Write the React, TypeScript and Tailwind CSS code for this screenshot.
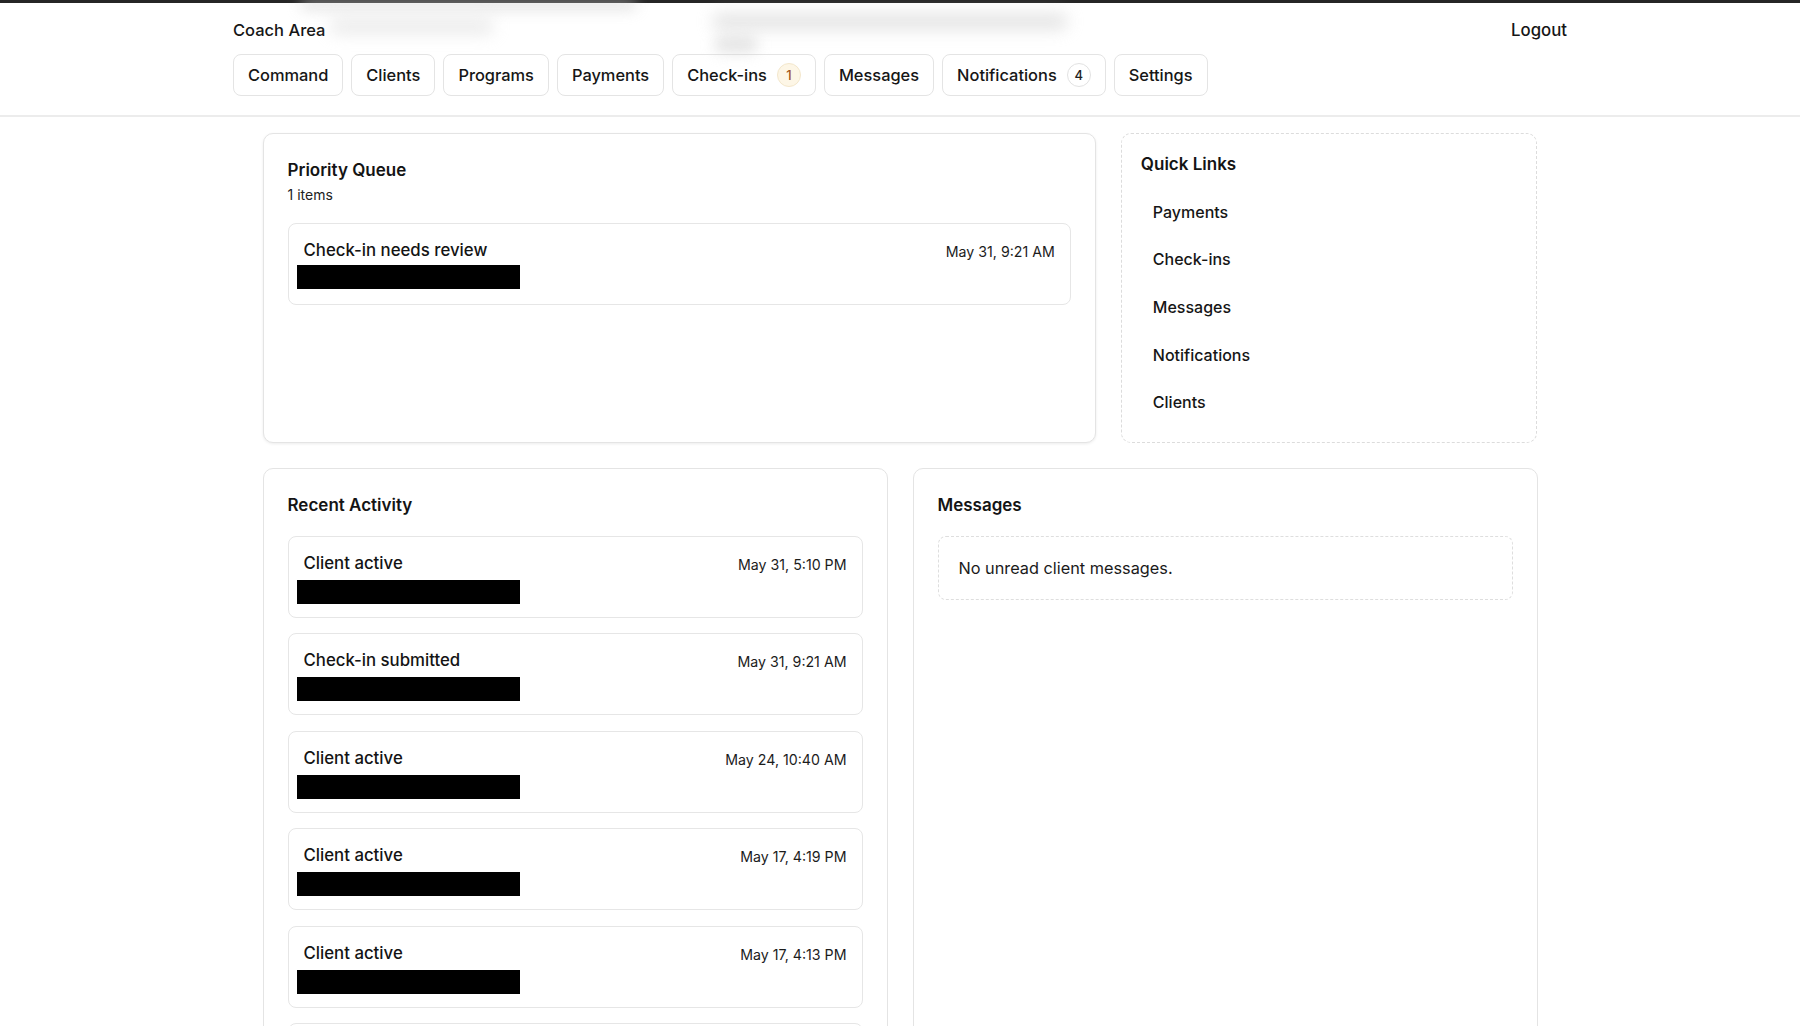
import React from "react";

const navItems: { label: string; badge?: string; badgeTone?: "warn" | "plain" }[] = [
  { label: "Command" },
  { label: "Clients" },
  { label: "Programs" },
  { label: "Payments" },
  { label: "Check-ins", badge: "1", badgeTone: "warn" },
  { label: "Messages" },
  { label: "Notifications", badge: "4", badgeTone: "plain" },
  { label: "Settings" },
];

const quickLinks = ["Payments", "Check-ins", "Messages", "Notifications", "Clients"];

const activity = [
  { title: "Client active", date: "May 31, 5:10 PM" },
  { title: "Check-in submitted", date: "May 31, 9:21 AM" },
  { title: "Client active", date: "May 24, 10:40 AM" },
  { title: "Client active", date: "May 17, 4:19 PM" },
  { title: "Client active", date: "May 17, 4:13 PM" },
  { title: "Client active", date: "May 10, 2:02 PM" },
];

function Item({ title, date, tight }: { title: string; date: string; tight?: boolean }) {
  return (
    <div
      className={
        tight
          ? "rounded-[8px] border border-[#e6e6e6] bg-white px-[15px] pt-[14px] pb-[15px]"
          : "rounded-[8px] border border-[#e6e6e6] bg-white px-[15px] pt-[14px] pb-[13px]"
      }
    >
      <div className="flex h-[24px] items-start justify-between">
        <span className="text-[16.8px] leading-[24px] font-medium text-[#141414]">{title}</span>
        <span className="pt-[4px] text-[14.2px] leading-[20px] text-[#1c1c1c]">{date}</span>
      </div>
      <div className={tight ? "mt-[3px] h-[24px]" : "mt-[5px] h-[24px]"}>
        <div className="-ml-[7px] h-[24px] w-[223px] bg-black" />
      </div>
    </div>
  );
}

export default function App() {
  return (
    <div className="relative min-h-screen bg-white font-['Inter',_'Noto_Sans',_sans-serif] text-[#111]">
      <div className="h-[3px] bg-[#262626]" />

      {/* blurred smudges over header */}
      <div className="pointer-events-none absolute left-[300px] top-[0px] h-[10px] w-[337px] rounded-full bg-[#d0d0d0] opacity-60 blur-[7px]" />
      <div className="pointer-events-none absolute left-[330px] top-[19px] h-[15px] w-[164px] rounded-full bg-[#d6d6d6] opacity-50 blur-[8px]" />
      <div className="pointer-events-none absolute left-[712px] top-[13px] h-[17px] w-[356px] rounded-full bg-[#d0d0d0] opacity-55 blur-[8px]" />
      <div className="pointer-events-none absolute left-[714px] top-[36px] h-[17px] w-[44px] rounded-full bg-[#cfcfcf] opacity-55 blur-[7px]" />

      <header className="border-b-2 border-[#ececec]">
        <div className="mx-auto w-[1334px] pt-[15px] pb-[19px]">
          <div className="flex h-[24px] items-center justify-between">
            <span className="text-[16.5px] leading-[24px] font-medium text-[#161616]">Coach Area</span>
            <span className="text-[16.8px] leading-[24px] font-medium text-[#161616]">Logout</span>
          </div>
          <nav className="mt-3 flex gap-2">
            {navItems.map((n) => (
              <button
                key={n.label}
                className="flex h-[42px] items-center gap-[10px] rounded-[8px] border border-[#e4e4e4] bg-white px-[14px] text-[16.4px] leading-[24px] font-medium text-[#161616]"
              >
                <span>{n.label}</span>
                {n.badge && (
                  <span
                    className={
                      n.badgeTone === "warn"
                        ? "flex h-[24px] w-[24px] items-center justify-center rounded-full border border-[#f3e7cc] bg-[#fdf6e6] text-[13px] font-medium text-[#a3561a]"
                        : "flex h-[24px] w-[24px] items-center justify-center rounded-full border border-[#e2e2e2] bg-white text-[13px] font-medium text-[#222]"
                    }
                  >
                    {n.badge}
                  </span>
                )}
              </button>
            ))}
          </nav>
        </div>
      </header>

      <main className="mx-auto w-[1275px] pt-4">
        <div className="grid grid-cols-[2fr_1fr] gap-[25px]">
          <section className="rounded-[10px] border border-[#e4e4e4] bg-white px-6 pt-[24px] pb-6 shadow-[0_1px_3px_rgba(0,0,0,0.08)]">
            <h2 className="text-[17px] leading-[24px] font-semibold text-[#141414]">Priority Queue</h2>
            <p className="mt-[3px] text-[14px] leading-[20px] text-[#222]">1 items</p>
            <div className="mt-[18px]">
              <Item tight title="Check-in needs review" date="May 31, 9:21 AM" />
            </div>
          </section>

          <section className="rounded-[10px] border border-dashed border-[#dcdcdc] bg-white px-[19px] pt-[18px] pb-[16px]">
            <h2 className="text-[17px] leading-[24px] font-semibold text-[#141414]">Quick Links</h2>
            <div className="mt-3 flex flex-col">
              {quickLinks.map((l) => (
                <a key={l} className="block py-[11.8px] pl-3 text-[16px] leading-[24px] font-medium text-[#161616]">
                  {l}
                </a>
              ))}
            </div>
          </section>
        </div>

        <div className="mt-[25px] grid grid-cols-2 gap-[25px] pb-10">
          <section className="rounded-[10px] border border-[#e4e4e4] bg-white px-6 pt-[24px] pb-6">
            <h2 className="text-[17px] leading-[24px] font-semibold text-[#141414]">Recent Activity</h2>
            <div className="mt-[19px] flex flex-col gap-[15.5px]">
              {activity.map((a, i) => (
                <Item key={i} title={a.title} date={a.date} />
              ))}
            </div>
          </section>

          <section className="rounded-[10px] border border-[#e4e4e4] bg-white px-6 pt-[24px] pb-6">
            <h2 className="text-[17px] leading-[24px] font-semibold text-[#141414]">Messages</h2>
            <div className="mt-[19px] rounded-[8px] border border-dashed border-[#dedede] px-5 py-[19px]">
              <p className="text-[16.3px] leading-[24px] text-[#1a1a1a]">No unread client messages.</p>
            </div>
          </section>
        </div>
      </main>
    </div>
  );
}
